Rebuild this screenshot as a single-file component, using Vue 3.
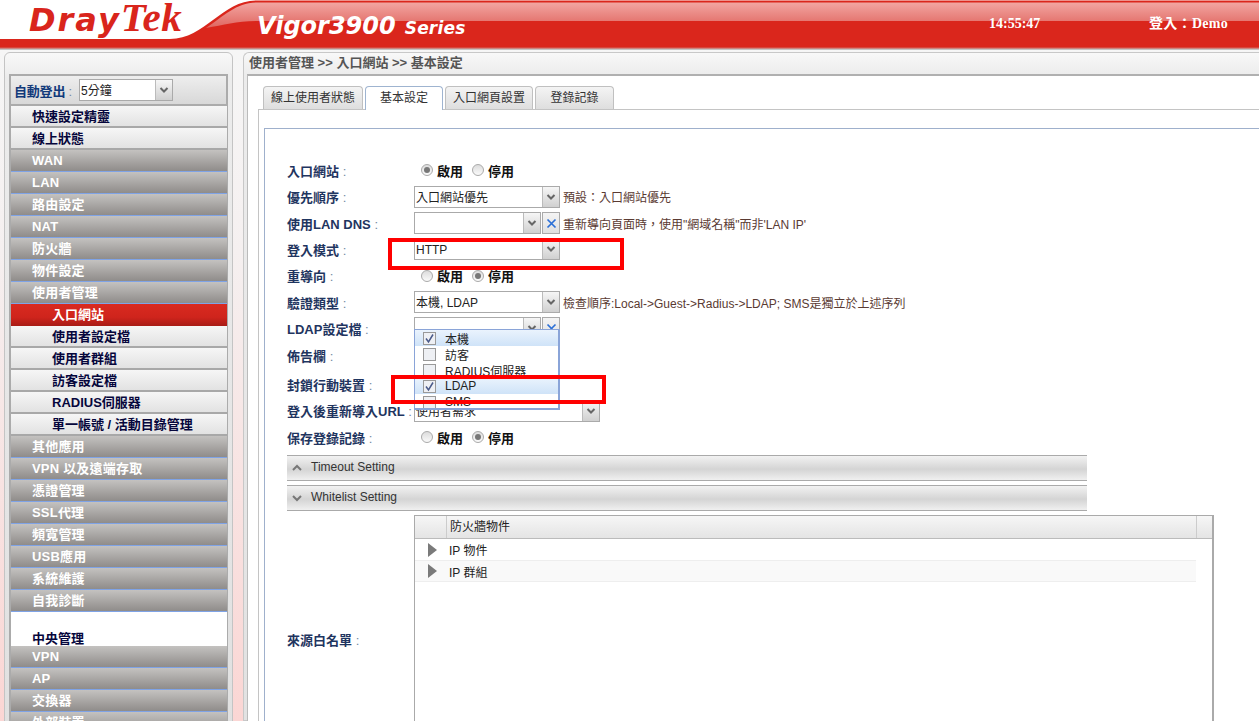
<script setup>
const lightTop = ['快速設定精靈', '線上狀態']
const dark1 = ['WAN', 'LAN', '路由設定', 'NAT', '防火牆', '物件設定', '使用者管理']
const subs = ['使用者設定檔', '使用者群組', '訪客設定檔', 'RADIUS伺服器', '單一帳號 / 活動目錄管理']
const dark2 = ['其他應用', 'VPN 以及遠端存取', '憑證管理', 'SSL代理', '頻寬管理', 'USB應用', '系統維護', '自我診斷']
const dark3 = ['VPN', 'AP', '交換器', '外部裝置']
const tabs = ['線上使用者狀態', '基本設定', '入口網頁設置', '登錄記錄']
const rows = [
  { label: '入口網站', h: 26, radio: 0 },
  { label: '優先順序', h: 27, sel: '入口網站優先', w: 146, note: '預設：入口網站優先' },
  { label: '使用LAN DNS', h: 26, sel: '', w: 127, clear: true, note: '重新導向頁面時，使用"網域名稱"而非\'LAN IP\'' },
  { label: '登入模式', h: 26, sel: 'HTTP', w: 146 },
  { label: '重導向', h: 27, radio: 1 },
  { label: '驗證類型', h: 26, sel: '本機, LDAP', w: 146, note: '檢查順序:Local->Guest->Radius->LDAP; SMS是獨立於上述序列' },
  { label: 'LDAP設定檔', h: 26, sel: '', w: 127, clear: true },
  { label: '佈告欄', h: 28 },
  { label: '封鎖行動裝置', h: 30 },
  { label: '登入後重新導入URL', h: 23, sel: '使用者需求', w: 186 },
  { label: '保存登錄記錄', h: 30, radio: 1 },
]
const opts = [
  { t: '本機', c: true },
  { t: '訪客', c: false },
  { t: 'RADIUS伺服器', c: false },
  { t: 'LDAP', c: true },
  { t: 'SMS', c: false },
]
</script>

<template>
  <div class="page">
    <header class="top">
      <svg class="swoosh" width="1259" height="50" viewBox="0 0 1259 50">
        <defs>
          <linearGradient id="gl" x1="0" y1="0" x2="0" y2="1">
            <stop offset="0" stop-color="#f2a6a2" />
            <stop offset="1" stop-color="#e0655f" />
          </linearGradient>
          <linearGradient id="fade" x1="0" y1="0" x2="0" y2="1">
            <stop offset="0" stop-color="#da261c" />
            <stop offset="1" stop-color="#c9a5a2" />
          </linearGradient>
        </defs>
        <path d="M0 39 L170 39 C205 39 222 0.5 256 0.5 L1259 0.5 L1259 48 L0 48 Z" fill="#da261c" />
        <path d="M206 28 C224 16 236 3 256 2.5 L1259 2.5 L1259 21 L256 21 C236 21 224 25 206 28 Z" fill="url(#gl)" />
        <rect x="0" y="47" width="1259" height="2" fill="url(#fade)" />
      </svg>
      <div class="logo"><span class="dray">Dray</span><span class="tek">Tek</span></div>
      <div class="model"><span class="vigor">Vigor3900</span><span class="series">Series</span></div>
      <div class="clock">14:55:47</div>
      <div class="user">登入：Demo</div>
    </header>

    <div class="body">
      <aside class="side">
        <div class="autolog">
          <span class="al-label">自動登出<i class="colon"> :</i></span>
          <div class="sel al-sel"><span class="sel-text">5分鐘</span><span class="arrow"><svg width="10" height="6" viewBox="0 0 10 6"><path d="M1.5 1 L5 4.5 L8.5 1" fill="none" stroke="#666" stroke-width="2" /></svg></span></div>
        </div>
        <div class="menu">
          <div v-for="m in lightTop" :key="m" class="mi light">{{ m }}</div>
          <div v-for="m in dark1" :key="m" class="mi dark">{{ m }}</div>
          <div class="mi active sub">入口網站</div>
          <div v-for="m in subs" :key="m" class="mi light sub">{{ m }}</div>
          <div v-for="m in dark2" :key="m" class="mi dark">{{ m }}</div>
          <div class="central">中央管理</div>
          <div v-for="m in dark3" :key="m" class="mi dark">{{ m }}</div>
        </div>
      </aside>

      <main class="main">
        <div class="crumb">使用者管理 &gt;&gt; 入口網站 &gt;&gt; 基本設定</div>
        <div class="panel">
          <div class="tabs">
            <div v-for="(t, i) in tabs" :key="t" class="tab" :class="{ on: i === 1 }">{{ t }}</div>
          </div>
          <div class="content">
            <div class="inner">
              <div class="form">
                <div v-for="r in rows" :key="r.label" class="row" :style="{ height: r.h + 'px' }">
                  <div class="lab">{{ r.label }}<i class="colon"> :</i></div>
                  <div class="field">
                    <div v-if="r.radio !== undefined" class="radios">
                      <span class="radio" :class="{ chk: r.radio === 0 }"></span><b>啟用</b>
                      <span class="radio r2" :class="{ chk: r.radio === 1 }"></span><b>停用</b>
                    </div>
                    <template v-else-if="r.sel !== undefined">
                      <div class="sel" :style="{ width: r.w + 'px' }">
                        <span class="sel-text">{{ r.sel }}</span>
                        <span class="arrow"><svg width="10" height="6" viewBox="0 0 10 6"><path d="M1.5 1 L5 4.5 L8.5 1" fill="none" stroke="#666" stroke-width="2" /></svg></span>
                      </div>
                      <span v-if="r.clear" class="clear"><svg width="11" height="11" viewBox="0 0 11 11"><path d="M1.5 1.5 L9.5 9.5 M9.5 1.5 L1.5 9.5" stroke="#2b6fd6" stroke-width="1.7" /></svg></span>
                      <span v-if="r.note" class="note">{{ r.note }}</span>
                    </template>
                  </div>
                </div>
              </div>

              <div class="acc acc1"><svg width="12" height="8" viewBox="0 0 12 8"><path d="M2 6 L6 2 L10 6" fill="none" stroke="#777" stroke-width="2" /></svg><span>Timeout Setting</span></div>
              <div class="acc acc2"><svg width="12" height="8" viewBox="0 0 12 8"><path d="M2 2 L6 6 L10 2" fill="none" stroke="#777" stroke-width="2" /></svg><span>Whitelist Setting</span></div>

              <div class="white">
                <div class="lab wl-lab">來源白名單<i class="colon"> :</i></div>
                <div class="grid">
                  <div class="g-head">
                    <div class="g-h0"></div>
                    <div class="g-h1">防火牆物件</div>
                    <div class="g-h2"></div>
                  </div>
                  <div class="g-row first"><svg width="9" height="14" viewBox="0 0 9 14"><path d="M0 0 L9 7 L0 14 Z" fill="#7a7a7a" /></svg><span>IP 物件</span></div>
                  <div class="g-row alt"><svg width="9" height="14" viewBox="0 0 9 14"><path d="M0 0 L9 7 L0 14 Z" fill="#7a7a7a" /></svg><span>IP 群組</span></div>
                </div>
              </div>
            </div>
          </div>
        </div>
      </main>
    </div>

    <div class="dropdown">
      <div v-for="o in opts" :key="o.t" class="opt" :class="{ picked: o.c }">
        <span class="cb"><svg v-if="o.c" width="11" height="11" viewBox="0 0 11 11"><path d="M2 5.5 L4.5 9 L9 1.5" fill="none" stroke="#4a5a8a" stroke-width="1.5" /></svg></span>
        <span>{{ o.t }}</span>
      </div>
    </div>
    <div class="mark m1"></div>
    <div class="mark m2"></div>
  </div>
</template>

<style>
html, body { margin: 0; padding: 0; overflow: hidden; background: #fff; }
</style>

<style scoped>
.page {
  position: relative;
  width: 1259px;
  height: 721px;
  overflow: hidden;
  font-family: "Liberation Sans", "Noto Sans CJK TC", sans-serif;
  font-size: 12px;
  background: #fff;
}
.colon { font-style: normal; font-weight: 400; color: #7487a0; white-space: pre; }
.top {
  position: relative;
  height: 50px;
  background: #fff;
  border-bottom: 1px solid #c4c4c4;
  box-sizing: border-box;
}
.swoosh { position: absolute; left: 0; top: 0; }
.logo { position: absolute; left: 29px; top: 0; color: #d9251c; font-style: italic; font-weight: 700; line-height: 34px; white-space: nowrap; }
.dray { font-family: "DejaVu Sans", sans-serif; font-size: 32px; letter-spacing: 2px; }
.tek { font-family: "Liberation Serif", serif; font-size: 41px; letter-spacing: 0.5px; }
.model { position: absolute; left: 257px; top: 10px; color: #fff; font-style: italic; font-weight: 700; line-height: 32px; white-space: nowrap; font-family: "DejaVu Sans", sans-serif; }
.vigor { font-size: 24px; letter-spacing: 0; }
.series { font-size: 17px; margin-left: 9px; letter-spacing: 0.2px; }
.clock { position: absolute; left: 989px; top: 16px; color: #fff; font: 700 14px/16px "Liberation Serif", serif; }
.user { position: absolute; left: 1149px; top: 16px; color: #fff; font: 700 14px/16px "Liberation Serif", "Noto Sans CJK TC", serif; letter-spacing: 0.3px; }

.body {
  display: flex;
  height: 671px;
  background: linear-gradient(#f6f6f6, #f5f0f0 30%, #fbd6d4);
  padding: 2px 0 0 4px;
  box-sizing: border-box;
}
.side {
  width: 229px;
  flex: none;
  box-sizing: border-box;
  background: linear-gradient(#f8f8f8, #ececec 24px, #e0e0e0);
  border: 1px solid #c4c4c4;
  border-radius: 6px 6px 0 0;
  padding: 21px 4px 0 4px;
  height: 700px;
}
.autolog {
  height: 32px;
  box-sizing: border-box;
  border: 2px solid #ababab;
  background: linear-gradient(#eee, #d8d8d8);
  display: flex;
  align-items: center;
  padding-left: 3px;
}
.al-label { width: 65px; color: #123a7a; font-weight: 700; white-space: nowrap; font-size: 13px; letter-spacing: -0.2px; }
.al-sel { width: 94px; }
.menu { border-left: 2px solid #ababab; border-right: 1px solid #ababab; background: #fff; }
.mi {
  height: 22px;
  line-height: 21px;
  box-sizing: border-box;
  padding-left: 21px;
  font-weight: 700;
  font-size: 13px;
  white-space: nowrap;
}
.light {
  background: linear-gradient(#f6f6f6, #e2e2e2);
  border-bottom: 2px solid #a8a8a8;
  color: #06063c;
}
.dark {
  background: linear-gradient(#c4c2c0, #8f8c8a);
  border-bottom: 1px solid #7fa3e6;
  color: #fff;
  letter-spacing: 0.2px;
}
.active {
  background: linear-gradient(#d92a20, #cf241c 60%, #a81c16);
  color: #fff;
}
.sub { padding-left: 41px; }
.central {
  height: 34px;
  box-sizing: border-box;
  padding: 20px 0 0 21px;
  font-weight: 700;
  font-size: 13px;
  line-height: 14px;
  color: #06063c;
  background: #fff;
}

.main { flex: 1; margin-left: 10px; min-width: 0; background: linear-gradient(#f8f8f8, #ececec 22px, #e2e2e2); border: 1px solid #c8c8c8; border-right: 0; border-radius: 6px 0 0 0; }
.crumb { height: 21px; line-height: 19px; padding-left: 5px; color: #555; font-weight: 700; font-size: 13px; white-space: nowrap; }
.panel { margin-left: 3px; background: #fff; border-top: 2px solid #b0b0b0; border-left: 1px solid #bbb; height: 700px; box-sizing: border-box; padding: 10px 0 0 10px; }
.tabs { display: flex; height: 23px; gap: 2px; padding-left: 5px; }
.tab {
  box-sizing: border-box;
  height: 23px;
  width: 78px;
  line-height: 23px;
  color: #333;
  border: 1px solid #c0c0c0;
  border-bottom: 0;
  border-radius: 4px 4px 0 0;
  background: linear-gradient(#f4f4f4, #dedede);
  white-space: nowrap;
  text-align: center;
}
.tab:nth-child(1) { width: 100px; }
.tab:nth-child(3) { width: 88px; }
.tab:nth-child(4) { width: 79px; }
.tab.on { background: #fff; border-color: #9fb4d0; height: 24px; z-index: 1; }
.content { border-left: 1px solid #c4c4c4; border-top: 1px solid #c4c4c4; padding: 18px 0 0 5px; height: 700px; box-sizing: border-box; }
.inner { border-left: 1px solid #9fb0cc; border-top: 1px solid #9fb0cc; padding: 28px 0 0 22px; height: 700px; box-sizing: border-box; }

.form { width: 800px; }
.row { display: flex; align-items: center; }
.lab { width: 127px; flex: none; color: #1f3560; font-weight: 700; font-size: 13px; white-space: nowrap; }
.field { display: flex; align-items: center; flex: 1; min-width: 0; }
.radios { display: flex; align-items: center; padding-left: 7px; color: #111; font-size: 13px; }
.radio { width: 10px; height: 10px; border-radius: 50%; border: 1px solid #aaa; background: linear-gradient(#dcdcdc, #fafafa); margin-right: 4px; display: inline-flex; align-items: center; justify-content: center; }
.radio.chk::after { content: ""; width: 6px; height: 6px; border-radius: 50%; background: #777; }
.r2 { margin-left: 9px; }
.sel { display: flex; height: 22px; box-sizing: border-box; border: 1px solid #aaa; background: #fff; }
.sel-text { flex: 1; padding: 1px 0 0 1px; line-height: 21px; height: 19px; color: #222; white-space: nowrap; overflow: hidden; }
.arrow { width: 16px; flex: none; border-left: 1px solid #bbb; background: linear-gradient(#f6f6f6, #d0d0d0); display: flex; align-items: center; justify-content: center; }
.clear { width: 18px; height: 22px; box-sizing: border-box; border: 1px solid #aaa; margin-left: 1px; background: linear-gradient(#f4f4f4, #e0e0e0); display: flex; align-items: center; justify-content: center; }
.note { margin-left: 3px; color: #5a3a32; white-space: nowrap; }

.acc { width: 800px; height: 26px; box-sizing: border-box; border-top: 1px solid #aaa; border-bottom: 1px solid #aaa; background: linear-gradient(#f2f2f2, #d4d4d4 55%, #f0f0f0); display: flex; align-items: center; padding-left: 4px; color: #333; }
.acc svg { margin-right: 8px; }
.acc span { margin-bottom: 2px; }
.acc1 { margin-top: 3px; }
.acc2 { margin-top: 4px; }
.white { display: flex; height: 300px; margin-top: 4px; }
.wl-lab { margin-top: 115px; }
.grid { width: 800px; height: 300px; box-sizing: border-box; border: 1px solid #aaa; border-width: 1px 2px 0 1px; color: #222; }
.g-head { display: flex; height: 23px; box-sizing: border-box; border-bottom: 1px solid #bbb; background: linear-gradient(#f6f6f6, #e4e4e4); }
.g-h0 { width: 31px; border-right: 1px solid #ccc; }
.g-h1 { flex: 1; line-height: 22px; padding-left: 3px; }
.g-h2 { width: 15px; border-left: 1px solid #ccc; }
.g-row { height: 22px; box-sizing: border-box; margin-right: 16px; display: flex; align-items: center; padding-left: 13px; gap: 12px; }
.g-row.first { height: 21px; }
.g-row.alt { background: #f9f9f9; border-top: 1px solid #eee; border-bottom: 1px solid #eee; }

.dropdown { position: absolute; left: 414px; top: 329px; width: 146px; height: 81px; box-sizing: border-box; border: 1px solid #8aa4d8; border-right-width: 2px; border-bottom-width: 2px; background: #fff; overflow: hidden; }
.opt { height: 16px; display: flex; align-items: center; padding-left: 8px; gap: 9px; color: #222; }
.opt.picked { background: linear-gradient(#eaf3fd, #cfe3f8); }
.cb { width: 11px; height: 11px; border: 1px solid #999; background: #eef0f4; display: inline-flex; flex: none; }
.mark { position: absolute; border: 4px solid #f00; box-sizing: border-box; }
.m1 { left: 388px; top: 238px; width: 236px; height: 32px; }
.m2 { left: 391px; top: 375px; width: 215px; height: 29px; }
</style>
